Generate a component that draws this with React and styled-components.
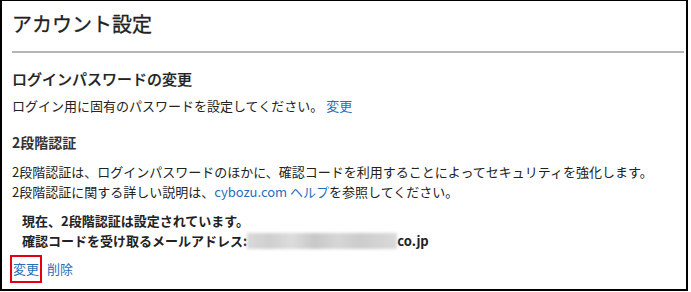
import React from "react";
import styled, { createGlobalStyle } from "styled-components";

const GlobalStyle = createGlobalStyle`
  html, body {
    margin: 0;
    padding: 0;
    background: #fff;
  }
  body {
    font-family: "Noto Sans CJK JP", "Liberation Sans", sans-serif;
    color: #333;
  }
`;

function App() {
  return (
    <>
      <GlobalStyle />
      <Frame>
        <Header>
          <Title>アカウント設定</Title>
        </Header>
        <Body>
          <SectionTitle>ログインパスワードの変更</SectionTitle>
          <Text>
            ログイン用に固有のパスワードを設定してください。 <Link>変更</Link>
          </Text>
          <SubTitle>2段階認証</SubTitle>
          <Para>
            2段階認証は、ログインパスワードのほかに、確認コードを利用することによってセキュリティを強化します。
            <br />
            2段階認証に関する詳しい説明は、<Link>cybozu.com ヘルプ</Link>を参照してください。
          </Para>
          <Status>
            <div>現在、2段階認証は設定されています。</div>
            <div>
              確認コードを受け取るメールアドレス:<Blurred />co.jp
            </div>
          </Status>
          <Actions>
            <Highlight>
              <Link>変更</Link>
            </Highlight>
            <Link>削除</Link>
          </Actions>
        </Body>
      </Frame>
    </>
  );
}

export default App;

const Frame = styled.div`
  box-sizing: border-box;
  width: 688px;
  height: 291px;
  border: 2px solid #000;
  border-top-width: 1px;
  background: #fff;
`;

const Header = styled.div`
  margin: 0 2px 0 10px;
  padding: 11px 0 15px;
  border-bottom: 2px solid #b5b5b5;
`;

const Title = styled.h1`
  margin: 0;
  font-size: 20px;
  line-height: 24px;
  font-weight: 400;
  color: #222;
  -webkit-text-stroke: 0.3px #222;
`;

const Body = styled.div`
  padding: 15px 0 0 10px;
`;

const SectionTitle = styled.h2`
  margin: 0;
  font-size: 15px;
  line-height: 22px;
  font-weight: 500;
  color: #222;
  -webkit-text-stroke: 0.2px #222;
`;

const Text = styled.p`
  margin: 6px 0 0;
  font-size: 13px;
  line-height: 20px;
  color: #222;
`;

const SubTitle = styled.h3`
  margin: 15px 0 0;
  font-size: 14px;
  line-height: 22px;
  font-weight: 700;
  color: #333;
`;

const Para = styled.p`
  margin: 9px 0 0;
  font-size: 13px;
  line-height: 20px;
  color: #222;
`;

const Status = styled.div`
  margin: 9px 0 0 10px;
  font-size: 13px;
  line-height: 20px;
  font-weight: 700;
  color: #222;

  div {
    display: flex;
    align-items: center;
  }
`;

const Blurred = styled.span`
  display: inline-block;
  width: 150px;
  height: 16px;
  background: linear-gradient(
    90deg,
    #d9d9d9 0%,
    #cfcfcf 15%,
    #dcdcdc 30%,
    #c8c8c8 45%,
    #d6d6d6 60%,
    #cccccc 75%,
    #dadada 100%
  );
  filter: blur(1.5px);
`;

const Actions = styled.div`
  display: flex;
  align-items: center;
  gap: 5px;
  margin: 4px 0 0 -2px;
  font-size: 13px;
  line-height: 20px;
`;

const Highlight = styled.span`
  display: inline-flex;
  align-items: center;
  height: 24px;
  padding: 0 1px;
  border: 2px solid #e3000f;
`;

const Link = styled.a`
  color: #2a6ebb;
  text-decoration: none;
  cursor: pointer;
  &:hover {
    text-decoration: underline;
  }
`;
